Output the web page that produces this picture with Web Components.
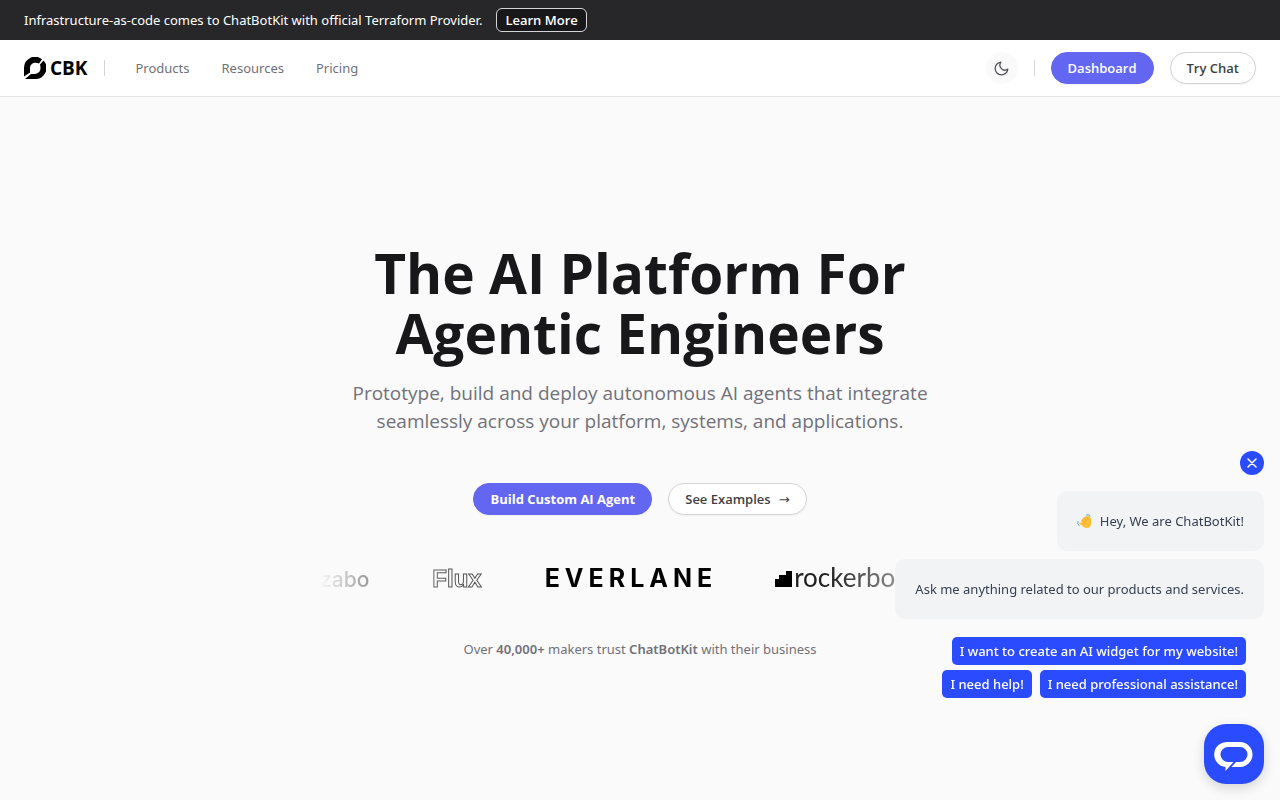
<!DOCTYPE html>
<html lang="en">
<head>
  <meta charset="utf-8">
  <meta name="viewport" content="width=device-width, initial-scale=1">
  <title>ChatBotKit</title>
  <style>
    :root {
      --primary-color: #6366f1;
      --chat-color: #2b4bff;
      --text-color: #18181b;
      --muted-color: #71717a;
    }
    body {
      margin: 0;
      min-height: 100vh;
      display: flex;
      flex-direction: column;
      background: #fafafa;
      color: var(--text-color);
      font: 13px/20px "Noto Sans", "Open Sans", sans-serif;
    }
    hero-section {
      flex: 1;
    }
  </style>
</head>
<body>
  <promo-banner>
    Infrastructure-as-code comes to ChatBotKit with official Terraform Provider.
    <a slot="action" href="#terraform">Learn More</a>
  </promo-banner>
  <site-navbar></site-navbar>
  <hero-section></hero-section>
  <chat-widget></chat-widget>

  <script>
    class PromoBanner extends HTMLElement {
      constructor() {
        super();
        this.attachShadow({ mode: "open" });
        this.shadowRoot.innerHTML = `
          <style>
            :host {
              display: flex;
              align-items: center;
              gap: 14px;
              min-height: 40px;
              padding: 0 24px;
              box-sizing: border-box;
              background: #27272a;
              color: #fff;
            }
            ::slotted(a) {
              padding: 1px 8px;
              border: 1px solid #d4d4d8;
              border-radius: 6px;
              background: #18181b;
              color: #fff;
              font-family: "Open Sans", sans-serif;
              font-weight: 600;
              text-decoration: none;
            }
          </style>
          <span><slot></slot></span>
          <slot name="action"></slot>
        `;
      }
    }
    customElements.define("promo-banner", PromoBanner);

    class PillLink extends HTMLElement {
      connectedCallback() {
        const to = this.getAttribute("to") || "#";
        const variant = this.getAttribute("variant") || "outline";

        this.attachShadow({ mode: "open" });
        this.shadowRoot.innerHTML = `
          <style>
            :host {
              display: inline-flex;
            }
            a {
              padding: 5px 16px;
              border: 1px solid #d4d4d8;
              border-radius: 16px;
              background: #fff;
              color: #3f3f46;
              font-family: "Open Sans", sans-serif;
              font-weight: 600;
              text-decoration: none;
              white-space: nowrap;
              box-shadow: 0 1px 2px rgba(0, 0, 0, 0.05);
            }
            a.primary {
              border-color: var(--primary-color);
              background: var(--primary-color);
              color: #fff;
            }
            a.strong {
              font-weight: 700;
            }
          </style>
          <a href="${to}" class="${variant}"><slot></slot></a>
        `;
      }
    }
    customElements.define("pill-link", PillLink);

    class SiteNavbar extends HTMLElement {
      constructor() {
        super();
        this.attachShadow({ mode: "open" });
        this.shadowRoot.innerHTML = `
          <style>
            :host {
              display: block;
              background: #fff;
              border-bottom: 1px solid #e4e4e7;
            }
            nav, .start, .brand, .links, .actions {
              display: flex;
              align-items: center;
            }
            nav {
              justify-content: space-between;
              min-height: 56px;
              padding: 0 24px;
            }
            .brand {
              gap: 4px;
              color: #000;
              font-family: "Open Sans", sans-serif;
              font-size: 19px;
              font-weight: 700;
              text-decoration: none;
            }
            .divider {
              width: 1px;
              height: 16px;
              background: #d4d4d8;
            }
            .brand + .divider {
              margin: 0 31px 0 16px;
            }
            .links {
              gap: 32px;
            }
            .links a {
              color: var(--muted-color);
              text-decoration: none;
            }
            .actions {
              gap: 16px;
            }
            button {
              display: grid;
              place-items: center;
              width: 32px;
              height: 32px;
              padding: 0;
              border: 0;
              border-radius: 50%;
              background: #fafafa;
              color: #52525b;
            }
          </style>
          <nav>
            <div class="start">
              <a class="brand" href="#home">
                <svg width="22" height="22" viewBox="0 0 22 22" aria-hidden="true">
                  <path d="M0 19.500V11A11 11 0 0 1 18 2.300L15 6.500C9 4.500 6 7.500 6 11.500V15.500Z"/>
                  <path d="M19.500 3.500A11 11 0 0 1 11 22H1L7 17C13 17.500 16.500 15.500 16.500 11C16.500 9.500 16.300 8.500 16 7.500Z"/>
                </svg>
                CBK
              </a>
              <span class="divider"></span>
              <div class="links">
                <a href="#products">Products</a>
                <a href="#resources">Resources</a>
                <a href="#pricing">Pricing</a>
              </div>
            </div>
            <div class="actions">
              <button type="button" aria-label="Toggle dark mode">
                <svg width="17" height="17" viewBox="0 0 24 24" fill="none" stroke="currentColor" stroke-width="1.8" stroke-linecap="round" stroke-linejoin="round">
                  <path d="M21 12.790A9 9 0 1 1 11.210 3 7 7 0 0 0 21 12.790Z"/>
                </svg>
              </button>
              <span class="divider"></span>
              <pill-link to="#dashboard" variant="primary">Dashboard</pill-link>
              <pill-link to="#chat">Try Chat</pill-link>
            </div>
          </nav>
        `;
      }
    }
    customElements.define("site-navbar", SiteNavbar);

    class LogoStrip extends HTMLElement {
      constructor() {
        super();
        this.attachShadow({ mode: "open" });
        this.shadowRoot.innerHTML = `
          <style>
            :host {
              display: flex;
              align-items: baseline;
              gap: 63px;
              width: 100%;
              max-width: 640px;
              height: 40px;
              overflow: hidden;
              white-space: nowrap;
              color: #000;
              -webkit-mask-image: linear-gradient(to right, transparent, #000 20%, #000 80%, transparent);
              mask-image: linear-gradient(to right, transparent, #000 20%, #000 80%, transparent);
            }
            .zabo {
              font: 500 21px/40px Inter, sans-serif;
            }
            .flux {
              color: #fafafa;
              font: 700 24px/40px "Liberation Sans", sans-serif;
              -webkit-text-stroke: 1px #555;
            }
            .everlane {
              font: 700 25px/40px Inter, sans-serif;
              letter-spacing: 5px;
              margin-right: -5px;
            }
            .rockerbox {
              color: #222;
              font: 400 26px/40px Lato, sans-serif;
            }
            svg {
              margin-right: 2px;
            }
          </style>
          <span class="zabo">zabo</span>
          <span class="flux">Flux</span>
          <span class="everlane">EVERLANE</span>
          <span class="rockerbox"><svg width="17" height="16" viewBox="0 0 17 16" aria-hidden="true">
            <path d="M0 16V8H4V4H11V0H17V16Z"/>
          </svg>rockerbox</span>
        `;
      }
    }
    customElements.define("logo-strip", LogoStrip);

    class HeroSection extends HTMLElement {
      constructor() {
        super();
        this.attachShadow({ mode: "open" });
        this.shadowRoot.innerHTML = `
          <style>
            :host {
              display: flex;
              flex-direction: column;
              align-items: center;
              justify-content: center;
              padding: 4px 24px 0;
              text-align: center;
            }
            h1 {
              max-width: 640px;
              margin: 0 0 16px;
              font-family: "Open Sans", sans-serif;
              font-size: 55px;
              line-height: 60px;
              font-weight: 700;
            }
            p {
              margin: 0;
              color: var(--muted-color);
            }
            .lead {
              max-width: 620px;
              font-family: "Open Sans", sans-serif;
              font-size: 19px;
              line-height: 28px;
            }
            .actions {
              display: flex;
              gap: 16px;
              margin: 48px 0 42px;
            }
            .trust {
              margin-top: 42px;
            }
            b {
              font-weight: 600;
            }
            .arrow {
              margin-left: 8px;
              font-family: "DejaVu Sans", sans-serif;
              font-weight: 400;
              line-height: 1;
            }
          </style>
          <h1>The AI Platform For Agentic Engineers</h1>
          <p class="lead">Prototype, build and deploy autonomous AI agents that integrate seamlessly across your platform, systems, and applications.</p>
          <div class="actions">
            <pill-link to="#build" variant="primary strong">Build Custom AI Agent</pill-link>
            <pill-link to="#examples">See Examples<span class="arrow">→</span></pill-link>
          </div>
          <logo-strip></logo-strip>
          <p class="trust">Over <b>40,000+</b> makers trust <b>ChatBotKit</b> with their business</p>
        `;
      }
    }
    customElements.define("hero-section", HeroSection);

    class ChatBubble extends HTMLElement {
      constructor() {
        super();
        this.attachShadow({ mode: "open" });
        this.shadowRoot.innerHTML = `
          <style>
            :host {
              display: block;
              padding: 20px;
              border-radius: 10px;
              background: #f1f3f5;
              color: #374151;
            }
          </style>
          <slot></slot>
        `;
      }
    }
    customElements.define("chat-bubble", ChatBubble);

    class ChatWidget extends HTMLElement {
      constructor() {
        super();
        this.attachShadow({ mode: "open" });
        this.shadowRoot.innerHTML = `
          <style>
            /* floats over the page in the corner of the window */
            :host {
              position: fixed;
              right: 16px;
              bottom: 16px;
              display: flex;
              flex-direction: column;
              align-items: flex-end;
              gap: 8px;
            }
            button {
              display: grid;
              place-items: center;
              padding: 0;
              border: 0;
              background: var(--chat-color);
              color: #fff;
              font: inherit;
            }
            .close {
              width: 24px;
              height: 24px;
              margin-bottom: 8px;
              border-radius: 50%;
            }
            .replies {
              display: flex;
              flex-wrap: wrap;
              justify-content: flex-end;
              gap: 5px 8px;
              max-width: 320px;
              margin: 10px 18px 18px 0;
            }
            .replies button {
              padding: 4px 8px;
              border-radius: 5px;
              font-weight: 500;
            }
            .launcher {
              width: 60px;
              height: 60px;
              border-radius: 22px;
              box-shadow: 0 4px 12px rgba(0, 0, 0, 0.15);
            }
            .launcher svg {
              overflow: visible;
            }
            .wave {
              margin-right: 4px;
              vertical-align: -3px;
            }
          </style>
          <button class="close" type="button" aria-label="Close">
            <svg width="10" height="10" viewBox="0 0 10 10" stroke="currentColor" stroke-width="1.5" stroke-linecap="round">
              <path d="M1 1 9 9M9 1 1 9"/>
            </svg>
          </button>
          <chat-bubble>
            <svg class="wave" width="15" height="15" viewBox="0 0 15 15" aria-hidden="true">
              <path d="M4 6.500 8 2.500Q9 1.800 9.500 2.800L11 1.800Q12.500 1 12.800 3L14 5V11Q13 14 9.500 14Q7 14 5 11.500L2.500 10Q1.500 9 3 8.500L5 9Z" fill="#fcbf35"/>
              <path d="M5 5.500 8 8M7 3.500 10 7M9.500 2.800 11.500 6M5 9 8 11" fill="none" stroke="#f5a92d"/>
              <path d="M9 1Q12 0 13.500 2M1 7Q0 10 2.500 12" fill="none" stroke="#5aa9df"/>
            </svg>
            Hey, We are ChatBotKit!
          </chat-bubble>
          <chat-bubble>Ask me anything related to our products and services.</chat-bubble>
          <div class="replies">
            <button type="button">I want to create an AI widget for my website!</button>
            <button type="button">I need help!</button>
            <button type="button">I need professional assistance!</button>
          </div>
          <button class="launcher" type="button" aria-label="Open chat">
            <svg width="38" height="25" viewBox="0 0 38 25" fill="currentColor">
              <path d="M13 0H25A12.500 12.500 0 0 1 25 25H16.500L21 20H25A7.500 7.500 0 0 0 25 5H13A7.500 7.500 0 0 0 13 20H18.500L10.500 29V25A12.500 12.500 0 0 1 13 0Z"/>
            </svg>
          </button>
        `;
      }
    }
    customElements.define("chat-widget", ChatWidget);
  </script>
</body>
</html>
